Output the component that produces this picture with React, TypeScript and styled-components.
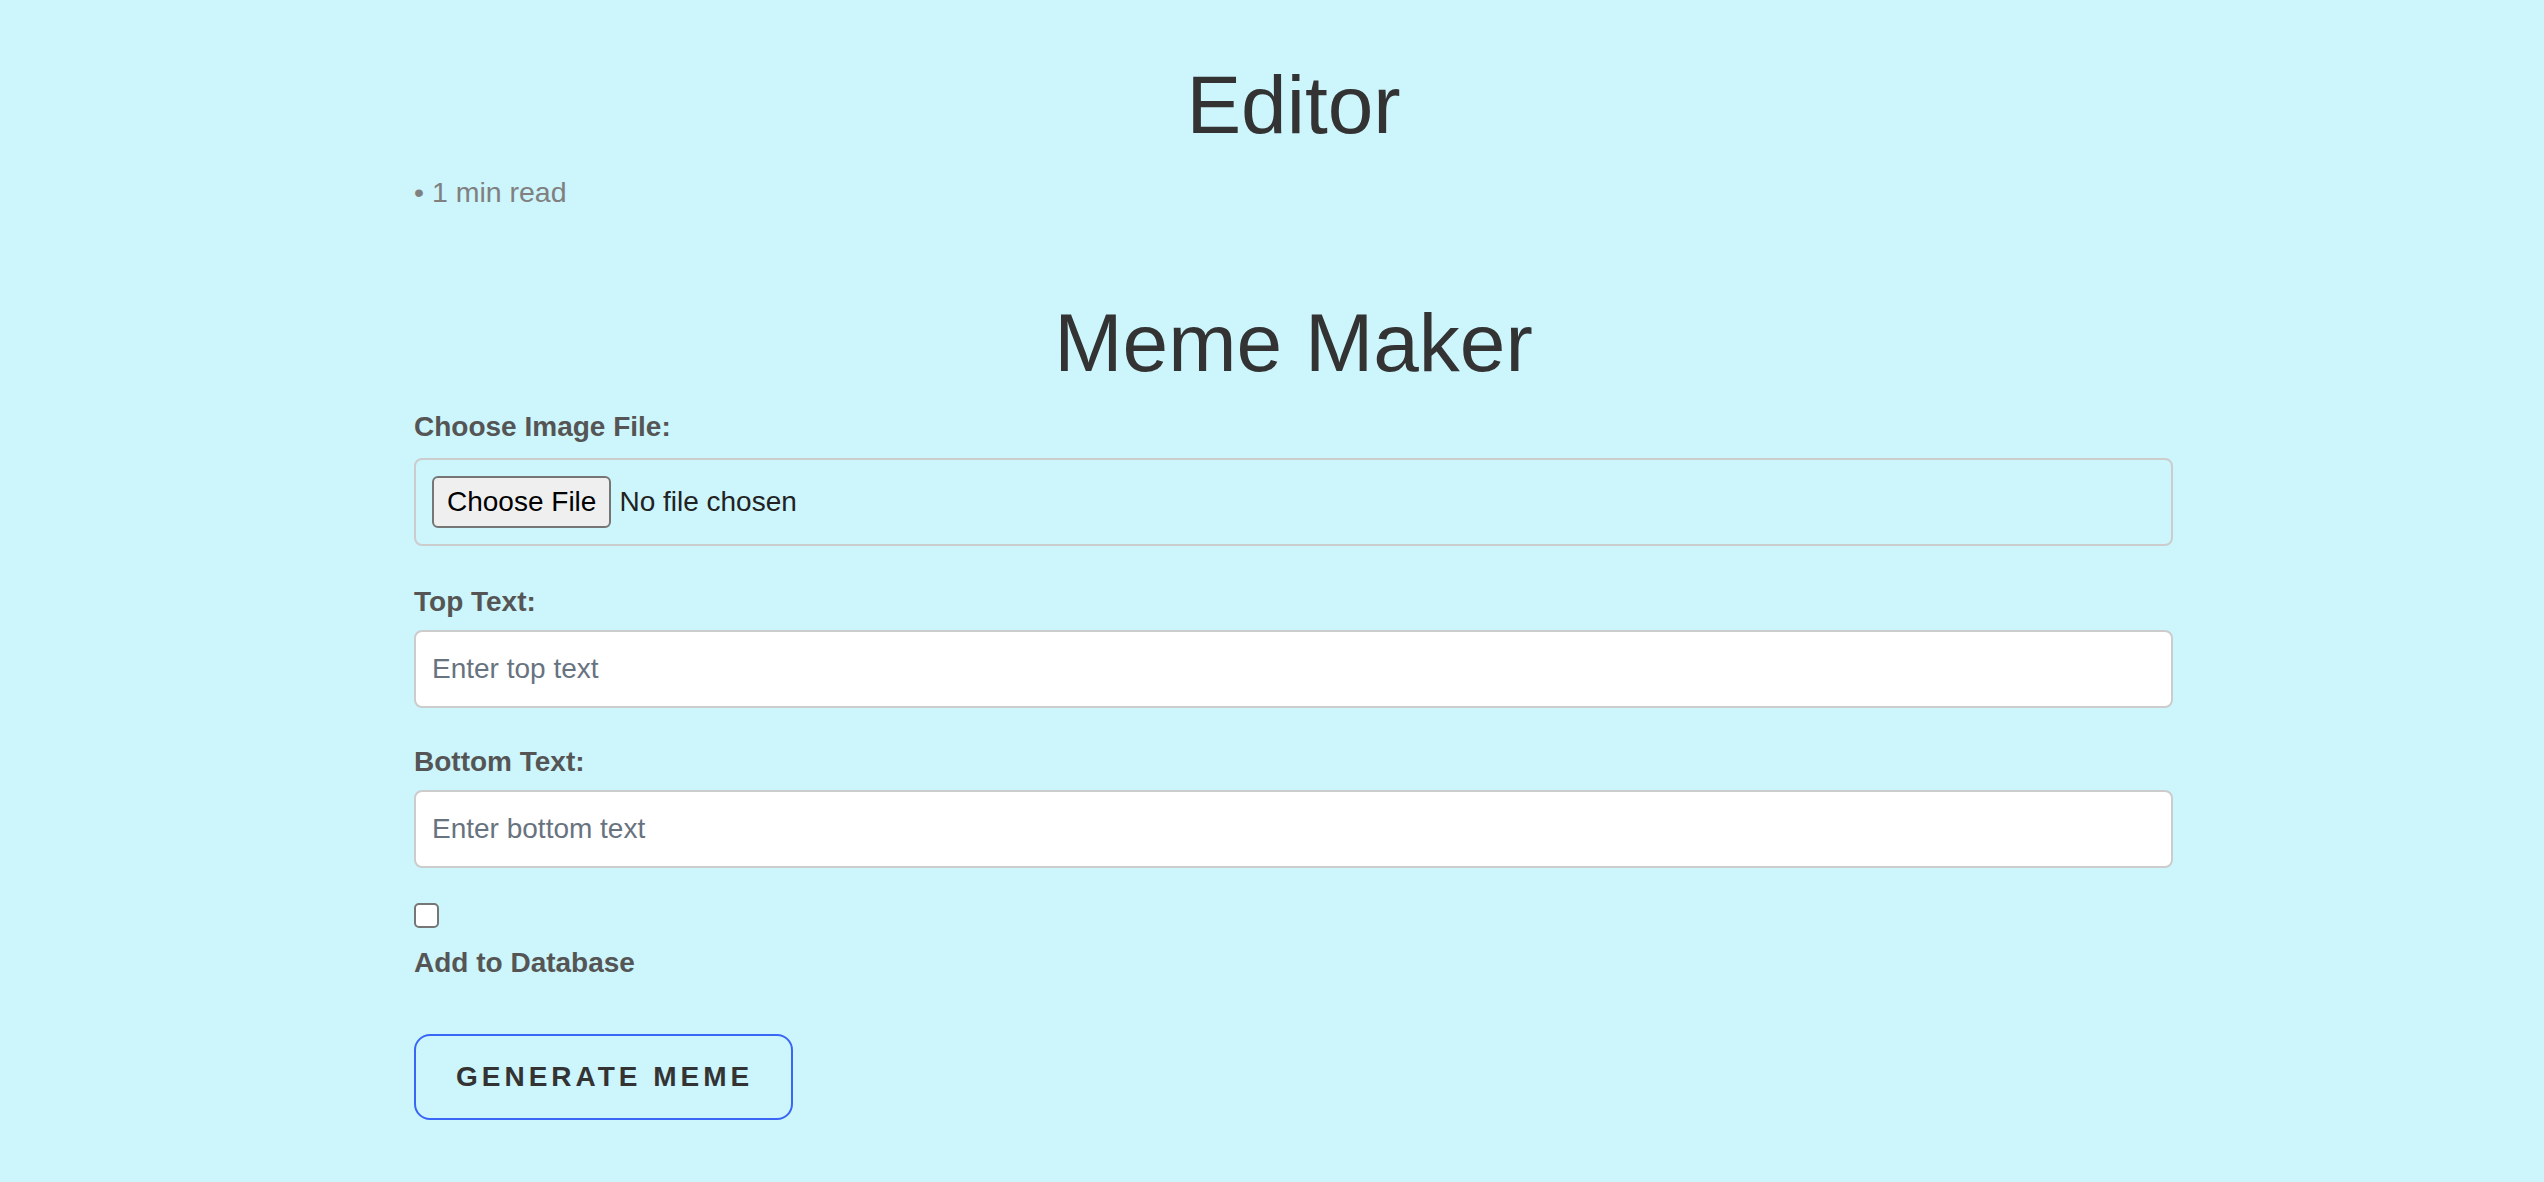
import React from "react";
import styled, { createGlobalStyle } from "styled-components";

const GlobalStyle = createGlobalStyle`
  html, body {
    margin: 0;
    padding: 0;
    background: #ccf5fc;
  }
  body {
    font-family: "Liberation Sans", Arial, Helvetica, sans-serif;
    color: #333;
  }
  * { box-sizing: border-box; }
`;

const Page = styled.main`
  min-height: 1182px;
  padding: 64px 371px 40px 414px;
  display: flex;
  flex-direction: column;
`;

const Title = styled.h1<{ $top?: number }>`
  margin: ${(p) => p.$top ?? 0}px 0 0;
  font-size: 82px;
  line-height: 82px;
  font-weight: 400;
  color: #333;
  text-align: center;
`;

const Meta = styled.p`
  margin: 33px 0 0;
  font-size: 28.5px;
  line-height: 27px;
  color: #808080;
`;

const Form = styled.form`
  margin-top: 29px;
  display: flex;
  flex-direction: column;
`;

const Field = styled.div<{ $gap: number; $after: number }>`
  display: flex;
  flex-direction: column;
  gap: ${(p) => p.$gap}px;
  margin-bottom: ${(p) => p.$after}px;
`;

const Label = styled.label`
  font-size: 28px;
  line-height: 28px;
  font-weight: 700;
  color: #555;
`;

const FileBox = styled.div`
  border: 2px solid #cccccc;
  border-radius: 8px;
  padding: 16px;
  display: flex;
  align-items: center;
`;

const FileInput = styled.input`
  width: 100%;
  font-family: "Liberation Sans", Arial, Helvetica, sans-serif;
  font-size: 28px;
  line-height: 32px;
  color: #222;
  &::file-selector-button {
    font-family: "Liberation Sans", Arial, Helvetica, sans-serif;
    font-size: 28px;
    line-height: 32px;
    padding: 8px 13px;
    margin: 0 8px 0 0;
    border: 2px solid #767676;
    border-radius: 6px;
    background: #efefef;
    color: #000;
  }
`;

const TextInput = styled.input`
  height: 78px;
  width: 100%;
  border: 2px solid #cccccc;
  border-radius: 8px;
  padding: 0 16px;
  background: #ffffff;
  font-family: "Liberation Sans", Arial, Helvetica, sans-serif;
  font-size: 28px;
  color: #333;
  outline: none;
  &::placeholder {
    color: #687380;
  }
`;

const CheckGroup = styled.div`
  display: flex;
  flex-direction: column;
  align-items: flex-start;
  gap: 21px;
`;

const Check = styled.input`
  appearance: none;
  margin: 0;
  width: 25px;
  height: 25px;
  border: 2px solid #767676;
  border-radius: 5px;
  background: #ffffff;
`;

const Button = styled.button`
  align-self: flex-start;
  margin-top: 57px;
  height: 86px;
  padding: 0 38px 0 40px;
  background: transparent;
  border: 2px solid #3a66f6;
  border-radius: 16px;
  font-family: "Liberation Sans", Arial, Helvetica, sans-serif;
  font-size: 28px;
  font-weight: 700;
  letter-spacing: 4px;
  text-transform: uppercase;
  color: #333;
`;

export default function App() {
  return (
    <>
      <GlobalStyle />
      <Page>
        <Title>Editor</Title>
        <Meta>• 1 min read</Meta>
        <Title $top={96}>Meme Maker</Title>
        <Form onSubmit={(e) => e.preventDefault()}>
          <Field $gap={17} $after={42}>
            <Label htmlFor="img">Choose Image File:</Label>
            <FileBox>
              <FileInput id="img" type="file" accept="image/*" />
            </FileBox>
          </Field>
          <Field $gap={14} $after={40}>
            <Label htmlFor="top">Top Text:</Label>
            <TextInput id="top" type="text" placeholder="Enter top text" />
          </Field>
          <Field $gap={14} $after={35}>
            <Label htmlFor="bottom">Bottom Text:</Label>
            <TextInput id="bottom" type="text" placeholder="Enter bottom text" />
          </Field>
          <CheckGroup>
            <Check id="db" type="checkbox" />
            <Label htmlFor="db">Add to Database</Label>
          </CheckGroup>
          <Button type="submit">Generate Meme</Button>
        </Form>
      </Page>
    </>
  );
}
